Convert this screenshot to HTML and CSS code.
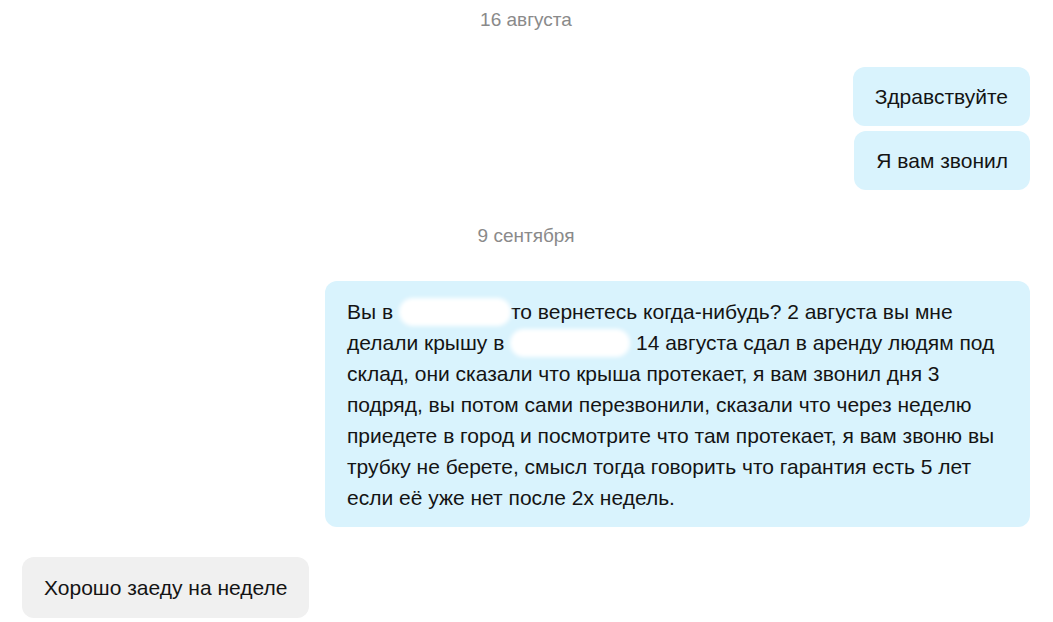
FILE: index.html
```html
<!DOCTYPE html>
<html lang="ru">
<head>
<meta charset="utf-8">
<link rel="stylesheet" href="styles.css">
</head>
<body>
<div class="chat">
  <div class="date date-first">16 августа</div>
  <div class="group group-out">
    <div class="bubble out">Здравствуйте</div>
    <div class="bubble out">Я вам звонил</div>
  </div>
  <div class="date">9 сентября</div>
  <div class="group group-out">
    <div class="bubble out long">Вы в <span class="hide hide-a" aria-hidden="true"></span>то вернетесь когда-нибудь? 2 августа вы мне делали крышу в <span class="hide hide-b" aria-hidden="true"></span> 14 августа сдал в аренду людям под склад, они сказали что крыша протекает, я вам звонил дня 3 подряд, вы потом сами перезвонили, сказали что через неделю приедете в город и посмотрите что там протекает, я вам звоню вы трубку не берете, смысл тогда говорить что гарантия есть 5 лет если её уже нет после 2х недель.</div>
  </div>
  <div class="group group-in">
    <div class="bubble in">Хорошо заеду на неделе</div>
  </div>
</div>
</body>
</html>
```
FILE: styles.css
```css
html, body {
  margin: 0;
  padding: 0;
  background: #ffffff;
}
body {
  font-family: "Liberation Sans", Arial, sans-serif;
  color: #141414;
}
.chat {
  display: flex;
  flex-direction: column;
  padding: 0 23px 0 22px;
}
.date {
  text-align: center;
  color: #8a8a8a;
  font-size: 19px;
  line-height: 24px;
  margin: 34px 0 33px;
}
.date-first {
  margin-top: 8px;
  margin-bottom: 35px;
}
.group {
  display: flex;
  flex-direction: column;
  gap: 5px;
}
.group-out {
  align-items: flex-end;
}
.group-in {
  align-items: flex-start;
  margin-top: 30px;
}
.bubble {
  font-size: 21px;
  line-height: 31px;
  padding: 14px 22px;
  border-radius: 12px;
}
.out {
  background: #d9f3fd;
}
.in {
  background: #f0f0f0;
  padding-top: 15px;
  padding-bottom: 15px;
}
.long {
  width: 661px;
  padding-top: 15px;
  padding-bottom: 14px;
}
.hide {
  display: inline-block;
  height: 28px;
  vertical-align: -7px;
  background: #ffffff;
  border-radius: 14px;
  filter: blur(2px);
}
.hide-a {
  width: 112px;
}
.hide-b {
  width: 120px;
}
```
